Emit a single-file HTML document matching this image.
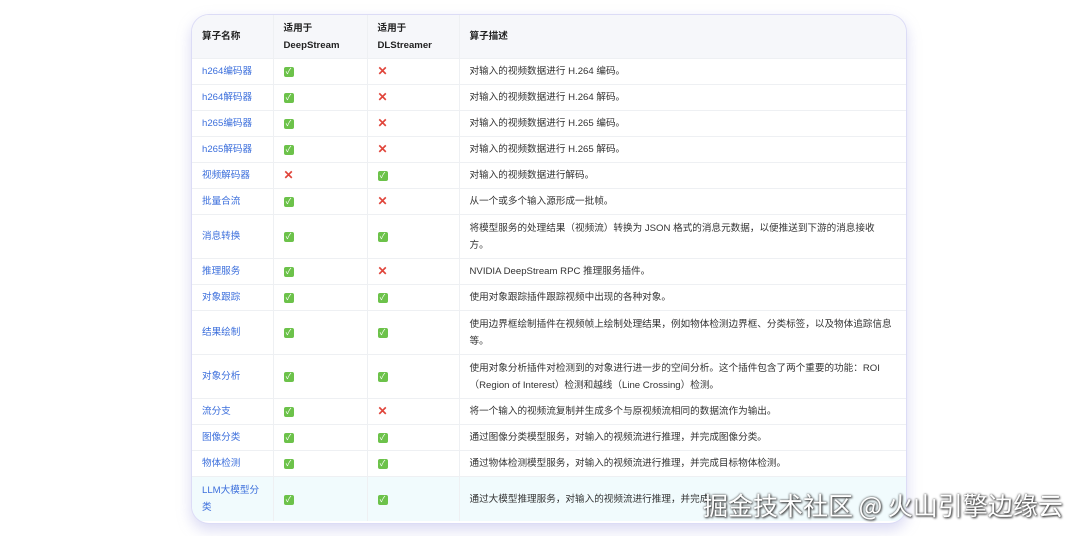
<!DOCTYPE html>
<html><head><meta charset="utf-8"><style>
body{margin:0;width:1080px;height:536px;background:#fff;font-family:"Liberation Sans","Noto Sans CJK SC",sans-serif;position:relative;overflow:hidden}
.card{position:absolute;left:191px;top:14px;width:714px;height:508px;border:1px solid #dcdcf6;border-radius:18px;box-shadow:0 6px 14px rgba(150,150,220,.35);overflow:hidden;background:#fff}
table{border-collapse:collapse;width:100%;font-size:9.6px;color:#333;table-layout:fixed}
td,th{padding:0 0 0 10px;text-align:left;vertical-align:middle;border-bottom:1px solid #eef0f3;border-right:1px solid #eef0f3;line-height:17px;white-space:nowrap;overflow:hidden}
th{background:#f6f7fa;font-weight:bold;height:43px;color:#222}
td:last-child,th:last-child{border-right:none}
td{height:25px}
tr.t td{height:43px}
a{color:#3c6fdc;text-decoration:none}
.ok{display:inline-block;width:10px;height:10px;background:#6cc24a;border-radius:2px;color:#fff;font-size:8px;line-height:10px;text-align:center}
.no{color:#e0443a;font-weight:bold;font-size:12px}
tr.last td{background:#f1fbfd;height:44px;border-bottom:none}
.wm{position:absolute;left:703px;top:487px;font-size:25px;color:#fff;font-family:"Noto Sans CJK SC",sans-serif;text-shadow:0 0 2px #333,1px 1px 2px #333;letter-spacing:0}
</style></head><body>
<div class="card"><table>
<colgroup><col style="width:81px"><col style="width:94px"><col style="width:92px"><col></colgroup>
<tr><th>算子名称</th><th>适用于<br>DeepStream</th><th>适用于<br>DLStreamer</th><th>算子描述</th></tr>
<tr><td><a>h264编码器</a></td><td><span class="ok">✓</span></td><td><span class="no">✕</span></td><td>对输入的视频数据进行 H.264 编码。</td></tr>
<tr><td><a>h264解码器</a></td><td><span class="ok">✓</span></td><td><span class="no">✕</span></td><td>对输入的视频数据进行 H.264 解码。</td></tr>
<tr><td><a>h265编码器</a></td><td><span class="ok">✓</span></td><td><span class="no">✕</span></td><td>对输入的视频数据进行 H.265 编码。</td></tr>
<tr><td><a>h265解码器</a></td><td><span class="ok">✓</span></td><td><span class="no">✕</span></td><td>对输入的视频数据进行 H.265 解码。</td></tr>
<tr><td><a>视频解码器</a></td><td><span class="no">✕</span></td><td><span class="ok">✓</span></td><td>对输入的视频数据进行解码。</td></tr>
<tr><td><a>批量合流</a></td><td><span class="ok">✓</span></td><td><span class="no">✕</span></td><td>从一个或多个输入源形成一批帧。</td></tr>
<tr class="t"><td><a>消息转换</a></td><td><span class="ok">✓</span></td><td><span class="ok">✓</span></td><td>将模型服务的处理结果（视频流）转换为 JSON 格式的消息元数据，以便推送到下游的消息接收<br>方。</td></tr>
<tr><td><a>推理服务</a></td><td><span class="ok">✓</span></td><td><span class="no">✕</span></td><td>NVIDIA DeepStream RPC 推理服务插件。</td></tr>
<tr><td><a>对象跟踪</a></td><td><span class="ok">✓</span></td><td><span class="ok">✓</span></td><td>使用对象跟踪插件跟踪视频中出现的各种对象。</td></tr>
<tr class="t"><td><a>结果绘制</a></td><td><span class="ok">✓</span></td><td><span class="ok">✓</span></td><td>使用边界框绘制插件在视频帧上绘制处理结果，例如物体检测边界框、分类标签，以及物体追踪信息<br>等。</td></tr>
<tr class="t"><td><a>对象分析</a></td><td><span class="ok">✓</span></td><td><span class="ok">✓</span></td><td>使用对象分析插件对检测到的对象进行进一步的空间分析。这个插件包含了两个重要的功能：ROI<br>（Region of Interest）检测和越线（Line Crossing）检测。</td></tr>
<tr><td><a>流分支</a></td><td><span class="ok">✓</span></td><td><span class="no">✕</span></td><td>将一个输入的视频流复制并生成多个与原视频流相同的数据流作为输出。</td></tr>
<tr><td><a>图像分类</a></td><td><span class="ok">✓</span></td><td><span class="ok">✓</span></td><td>通过图像分类模型服务，对输入的视频流进行推理，并完成图像分类。</td></tr>
<tr><td><a>物体检测</a></td><td><span class="ok">✓</span></td><td><span class="ok">✓</span></td><td>通过物体检测模型服务，对输入的视频流进行推理，并完成目标物体检测。</td></tr>
<tr class="last"><td><a>LLM大模型分<br>类</a></td><td><span class="ok">✓</span></td><td><span class="ok">✓</span></td><td>通过大模型推理服务，对输入的视频流进行推理，并完成</td></tr>
</table></div>
<div class="wm">掘金技术社区 @ 火山引擎边缘云</div>
</body></html>
